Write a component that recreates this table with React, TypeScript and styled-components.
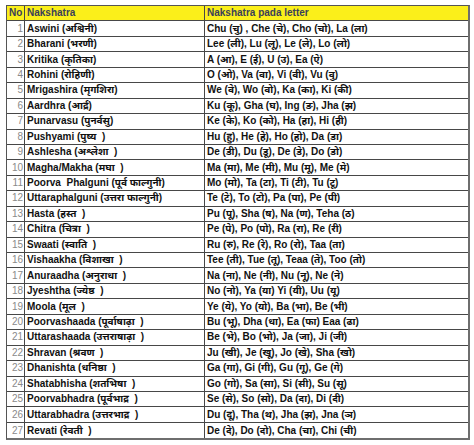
import styled, { createGlobalStyle } from 'styled-components';

const GlobalStyle = createGlobalStyle`
	html, body {
		margin: 0;
		padding: 0;
		background: #ffffff;
	}
	body {
		font-family: "Liberation Sans", Arial, "Noto Sans Devanagari", "Lohit Devanagari", "Noto Sans", sans-serif;
	}
`

const Page = styled.div`
	width: 474px;
	height: 445px;
	padding: 5px 4px 0 6px;
	box-sizing: border-box;
`

const Table = styled.div`
	display: grid;
	grid-auto-rows: 15.45px;
	border-top: 1px solid #555555;
	border-left: 1px solid #555555;
	border-right: 2px solid #6e6e6e;
	border-bottom: 2px solid #6e6e6e;
`

const Row = styled.div<{ $head?: boolean }>`
	display: grid;
	grid-template-columns: 18px 180px 1fr;
	background: ${p => (p.$head ? '#fbef1a' : '#ffffff')};
	border-bottom: 1px solid #474747;
	&:last-child {
		border-bottom: none;
	}
`

const Cell = styled.div<{ $num?: boolean; $head?: boolean }>`
	display: flex;
	align-items: center;
	justify-content: ${p => (p.$num ? 'flex-end' : 'flex-start')};
	padding: ${p => (p.$num ? '0 1px 0 0' : '0 0 0 2px')};
	border-right: 1px solid #474747;
	font-size: 10px;
	font-weight: ${p => (p.$num && !p.$head ? 400 : 700)};
	color: ${p => (p.$head ? '#3a3f5a' : p.$num ? '#8a8a8a' : '#111111')};
	white-space: pre;
	overflow: hidden;
	line-height: 1;
	&:last-child {
		border-right: none;
	}
`

const rows: [string, string][] = [
	['Aswini (अश्विनी)', 'Chu (चु) , Che (चे), Cho (चो), La (ला)'],
	['Bharani (भरणी)', 'Lee (ली), Lu (लू), Le (ले), Lo (लो)'],
	['Kritika (कृतिका)', 'A (आ), E (ई), U (उ), Ea (ऐ)'],
	['Rohini (रोहिणी)', 'O (ओ), Va (वा), Vi (वी), Vu (वु)'],
	['Mrigashira (मृगशिरा)', 'We (वे), Wo (वो), Ka (का), Ki (की)'],
	['Aardhra (आर्द्र)', 'Ku (कू), Gha (घ), Ing (ङ), Jha (झ)'],
	['Punarvasu (पुनर्वसु)', 'Ke (के), Ko (को), Ha (हा), Hi (ही)'],
	['Pushyami (पुष्य  )', 'Hu (हु), He (हे), Ho (हो), Da (डा)'],
	['Ashlesha (अश्लेशा  )', 'De (डी), Du (डू), De (डे), Do (डो)'],
	['Magha/Makha (मघा  )', 'Ma (मा), Me (मी), Mu (मू), Me (मे)'],
	['Poorva  Phalguni (पूर्व फाल्गुनी)', 'Mo (मो), Ta (टा), Ti (टी), Tu (टू)'],
	['Uttaraphalguni (उत्तरा फाल्गुनी)', 'Te (टे), To (टो), Pa (पा), Pe (पी)'],
	['Hasta (हस्त  )', 'Pu (पू), Sha (ष), Na (ण), Teha (ठ)'],
	['Chitra (चित्रा  )', 'Pe (पे), Po (पो), Ra (रा), Re (री)'],
	['Swaati (स्वाति  )', 'Ru (रु), Re (रे), Ro (रो), Taa (ता)'],
	['Vishaakha (विशाखा  )', 'Tee (ती), Tue (तू), Teaa (ते), Too (तो)'],
	['Anuraadha (अनुराधा  )', 'Na (ना), Ne (नी), Nu (नू), Ne (ने)'],
	['Jyeshtha (ज्येष्ठ  )', 'No (नो), Ya (या) Yi (यी), Uu (यू)'],
	['Moola (मूल  )', 'Ye (ये), Yo (यो), Ba (भा), Be (भी)'],
	['Poorvashaada (पूर्वाषाढ़ा  )', 'Bu (भू), Dha (धा), Ea (फा) Eaa (ढा)'],
	['Uttarashaada (उत्तराषाढ़ा  )', 'Be (भे), Bo (भो), Ja (जा), Ji (जी)'],
	['Shravan (श्रवण  )', 'Ju (खी), Je (खू), Jo (खे), Sha (खो)'],
	['Dhanishta (धनिष्ठा  )', 'Ga (गा), Gi (गी), Gu (गू), Ge (गे)'],
	['Shatabhisha (शतभिषा  )', 'Go (गो), Sa (सा), Si (सी), Su (सू)'],
	['Poorvabhadra (पूर्वभाद्र  )', 'Se (से), So (सो), Da (दा), Di (दी)'],
	['Uttarabhadra (उत्तरभाद्र  )', 'Du (दू), Tha (थ), Jha (झ), Jna (ञ)'],
	['Revati (रेवती  )', 'De (दे), Do (दो), Cha (चा), Chi (ची)'],
];

export default function App() {
	return (
		<>
			<GlobalStyle />
			<Page>
				<Table>
					<Row $head>
						<Cell $head>No</Cell>
						<Cell $head>Nakshatra</Cell>
						<Cell $head>Nakshatra pada letter</Cell>
					</Row>
					{rows.map(([name, letters], i) => (
						<Row key={i}>
							<Cell $num>{i + 1}</Cell>
							<Cell>{name}</Cell>
							<Cell>{letters}</Cell>
						</Row>
					))}
				</Table>
			</Page>
		</>
	);
}
